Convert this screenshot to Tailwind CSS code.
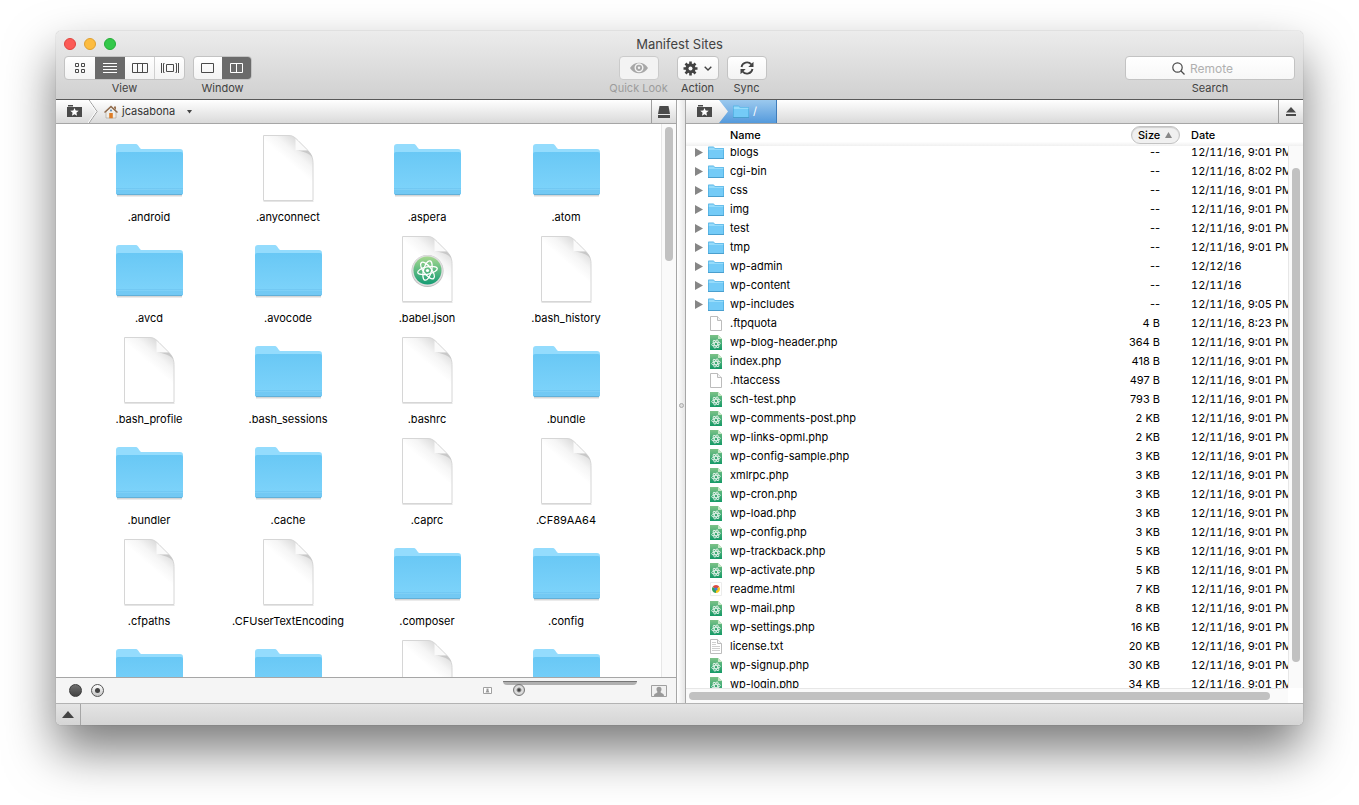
<!DOCTYPE html>
<html lang="en">
<head>
  <meta charset="UTF-8">
  <title>Manifest Sites</title>
  <meta name="viewport" content="width=device-width, initial-scale=1">
  <script src="https://cdn.jsdelivr.net/npm/@tailwindcss/browser@4"></script>
</head>
<body class="h-screen overflow-hidden bg-white px-14 pt-[31px] pb-20 font-['Inter','Liberation_Sans',sans-serif] text-[11px] text-black">

<!-- Shared icons -->
<svg class="absolute size-0" aria-hidden="true">
  <defs>
    <linearGradient id="gFolder" x1="0" y1="0" x2="0" y2="1"><stop offset="0" stop-color="#69c8f5"/><stop offset="1" stop-color="#7fd4fb"/></linearGradient>
    <linearGradient id="gAtom" x1="0" y1="0" x2="0" y2="1"><stop offset="0" stop-color="#a5d88f"/><stop offset="1" stop-color="#149c74"/></linearGradient>
    <linearGradient id="gPhp" x1="0" y1="0" x2="0" y2="1"><stop offset="0" stop-color="#7cc287"/><stop offset="1" stop-color="#169a67"/></linearGradient>
    <linearGradient id="gPage" gradientUnits="userSpaceOnUse" x1="34" y1="27" x2="48" y2="11"><stop offset="0" stop-color="#fff"/><stop offset="0.5" stop-color="#f5f5f5"/><stop offset="1" stop-color="#dedede"/></linearGradient>
  </defs>
  <symbol id="folder" viewBox="0 0 68 68">
    <path d="M2 61h65v1.500H2z" fill="#000" opacity=".16"/>
    <path d="M1 13a3 3 0 0 1 3-3h16c2 0 2.700 .6 3.700 2.200 1.300 2 1.800 2.800 3.800 2.800H65a3 3 0 0 1 3 3v42H1z" fill="#94dcfd"/>
    <path d="M1 20a2 2 0 0 1 2-2h63a2 2 0 0 1 2 2v39a2 2 0 0 1-2 2H3a2 2 0 0 1-2-2z" fill="url(#gFolder)"/>
    <path d="M1 54h67v6H1z" fill="#66bdea" opacity=".45"/>
    <path d="M1 55.500h67" stroke="#8ad7fa" opacity=".5"/>
    <path d="M2 60.500h65" stroke="#62b0d8"/>
  </symbol>
  <symbol id="page" viewBox="0 0 68 68">
    <path d="M9.500 67.500h50" stroke="#000" opacity=".1"/>
    <path d="M9.500 1.500H35c4 0 6 2 9 5l9 9c4 4 6 8 6 13v38H9.500z" fill="url(#gPage)" stroke="#d6d6d6"/>
    <path d="M41.500 16.500V4.800L53.500 16.500z" fill="#fafafa"/>
    <path d="M41.500 16.500h12c2 1.500 4 4 5 7-3-4-9-6.500-17-7z" fill="#bdbdbd" opacity=".7"/>
  </symbol>
  <symbol id="atom" viewBox="0 0 32 32">
    <g fill="none" stroke="#fff" stroke-width="1.300">
      <ellipse cx="16" cy="16" rx="4" ry="10" transform="rotate(15 16 16)"/>
      <ellipse cx="16" cy="16" rx="4" ry="10" transform="rotate(-38 16 16)"/>
      <ellipse cx="16" cy="16" rx="3.600" ry="10" transform="rotate(78 16 16)"/>
    </g>
    <circle cx="16" cy="16" r="1.600" fill="#fff"/>
  </symbol>
  <symbol id="atompage" viewBox="0 0 68 68">
    <use href="#page"/>
    <circle cx="34.500" cy="36" r="16" fill="#bdbdbd"/>
    <circle cx="34.500" cy="35.500" r="15.500" fill="#dedede"/>
    <circle cx="34.500" cy="35.500" r="14" fill="url(#gAtom)"/>
    <use href="#atom" x="18.500" y="19.500" width="32" height="32"/>
  </symbol>
  <symbol id="folder16" viewBox="0 0 16 16">
    <path d="M0 2.500C0 2 .3 1.500 1 1.500h4.500L7 3h8.500c.3 0 .5.2.5.500V14H0z" fill="#58b5e6"/>
    <path d="M.8 2.500h5l1 1.300h8.500V5H.8z" fill="#97dcfb"/>
    <path d="M1 5h14v8H1z" fill="#74cbf7"/>
    <path d="M0 13.500h16" stroke="#4a9fce"/>
  </symbol>
  <symbol id="page16" viewBox="0 0 16 16">
    <path d="M2.500 .5h7l4 4v10h-11z" fill="#fff" stroke="#bcbcbc"/>
    <path d="M9.500 .5v4h4" fill="#f4f4f4" stroke="#bcbcbc"/>
  </symbol>
  <symbol id="text16" viewBox="0 0 16 16">
    <use href="#page16"/>
    <path d="M4 3.500h4M4 5.500h4M4 7.500h8M4 9.500h8M4 11.500h8" stroke="#d0d0d0"/>
  </symbol>
  <symbol id="php16" viewBox="0 0 16 16">
    <path d="M2 0h8l4 4v11H2z" fill="url(#gPhp)"/>
    <path d="M10 0l4 4h-4z" fill="#c8e8c6"/>
    <g fill="none" stroke="#fff" stroke-width=".8" opacity=".9">
      <ellipse cx="8" cy="9" rx="1.700" ry="4.400" transform="rotate(20 8 9)"/>
      <ellipse cx="8" cy="9" rx="1.700" ry="4.400" transform="rotate(-35 8 9)"/>
      <ellipse cx="8" cy="9" rx="4.400" ry="1.600" transform="rotate(-10 8 9)"/>
    </g>
  </symbol>
  <symbol id="html16" viewBox="0 0 16 16">
    <path d="M2.500 .5h11v13h-11z" fill="#fff" stroke="#ececec"/>
    <path d="M8 7 4.500 5A4 4 0 0 1 11.500 5z" fill="#dd4b3e"/>
    <path d="M8 7 4.500 5A4 4 0 0 0 8 11z" fill="#35a056"/>
    <path d="M8 7 11.500 5A4 4 0 0 1 8 11z" fill="#fbc916"/>
    <circle cx="8" cy="7" r="1.600" fill="#3c7ce0"/>
  </symbol>
  <symbol id="places" viewBox="0 0 15 13">
    <path d="M1 0h5v1.500H1zM0 2h15v10H0z" fill="#4a4a4a"/>
    <path d="M7.500 2.900l1.200 2.700 3 .2-2.300 2 .7 3-2.600-1.600-2.600 1.600.7-3-2.300-2 3-.2z" fill="#fff"/>
  </symbol>
</svg>

<main class="flex h-full flex-col overflow-hidden rounded-[5px] bg-white shadow-[0_0_1px_rgba(0,0,0,0.45),0_25px_50px_rgba(0,0,0,0.53)]">

  <!-- Title bar and toolbar -->
  <header class="flex shrink-0 flex-col border-b border-[#585858] bg-linear-to-b from-[#ececec] to-[#d0d0d0] text-[#424242]">
    <div class="relative flex h-[25px] items-center gap-2 px-2">
      <button class="size-3 rounded-full border border-[#e0443e] bg-[#fc5b57]" aria-label="Close"></button>
      <button class="size-3 rounded-full border border-[#dfa030] bg-[#fdbc40]" aria-label="Minimize"></button>
      <button class="size-3 rounded-full border border-[#24ad37] bg-[#34c84a]" aria-label="Zoom"></button>
      <h1 class="pointer-events-none absolute inset-x-0 text-center text-[13px] leading-4">Manifest Sites</h1>
    </div>
    <div class="flex px-2 pb-[3px] text-center leading-4">
      <div class="w-[121px]">
        <div class="flex h-6 overflow-hidden rounded-[4px] border border-[#c3c3c3] bg-linear-to-b from-white to-[#f3f3f3]">
          <button class="grid w-[30px] place-items-center" aria-label="Icons">
            <svg width="12" height="12" fill="none" stroke="#4a4a4a"><path d="M1.500 1.500h3v3h-3zM7.500 1.500h3v3h-3zM1.500 7.500h3v3h-3zM7.500 7.500h3v3h-3z"/></svg>
          </button>
          <button class="grid w-[30px] place-items-center bg-[#6b6b6b]" aria-label="List">
            <svg width="14" height="12" stroke="#fff"><path d="M0 1.500h14M0 4.500h14M0 7.500h14M0 10.500h14"/></svg>
          </button>
          <button class="grid flex-1 place-items-center border-r border-[#d0d0d0]" aria-label="Columns">
            <svg width="16" height="10" fill="none" stroke="#4a4a4a"><path d="M.5 .5h15v9H.5zM5.500 .5v9M10.500 .5v9"/></svg>
          </button>
          <button class="grid flex-1 place-items-center" aria-label="Cover Flow">
            <svg width="18" height="12" fill="none" stroke="#4a4a4a"><path d="M5.500 2.500h7v7h-7zM.5 1v10M17.500 1v10M3.500 1.500h-1v9h1M14.500 1.500h1v9h-1"/></svg>
          </button>
        </div>
        View
      </div>
      <div class="ml-2 w-[59px]">
        <div class="flex h-6 overflow-hidden rounded-[4px] border border-[#c3c3c3] bg-linear-to-b from-white to-[#f3f3f3]">
          <button class="grid flex-1 place-items-center" aria-label="Single pane">
            <svg width="14" height="11" fill="none" stroke="#4a4a4a"><path d="M.5 .5h12v9H.5z"/></svg>
          </button>
          <button class="-mr-px grid w-[30px] place-items-center bg-[#6b6b6b]" aria-label="Two panes">
            <svg width="14" height="11" fill="none" stroke="#fff"><path d="M.5 .5h12v9H.5zM6.500 .5v9"/></svg>
          </button>
        </div>
        Window
      </div>
      <div class="ml-auto flex w-14 flex-col items-center whitespace-nowrap text-[#9c9c9c]">
        <button id="look" disabled class="grid h-6 w-10 place-items-center rounded-[4px] border border-[#cbcbcb] bg-[#f3f3f3]" aria-label="Quick Look">
          <svg width="18" height="12" viewBox="0 0 18 12"><path d="M0 6c4-7 14-7 18 0-4 7-14 7-18 0z" fill="#a8a8a8"/><circle cx="9" cy="5.800" r="3.800" fill="none" stroke="#f3f3f3" stroke-width="1.400"/><circle cx="9" cy="5.800" r="1.200" fill="#f3f3f3"/></svg>
        </button>
        <label for="look">Quick Look</label>
      </div>
      <div class="ml-2.5 flex w-[42px] flex-col items-center">
        <button id="action" class="flex h-6 w-full items-center justify-center gap-1.5 rounded-[4px] border border-[#c3c3c3] bg-linear-to-b from-white to-[#f3f3f3]" aria-label="Action">
          <svg width="15" height="15" viewBox="-7.500 -7.500 15 15"><g stroke="#424242" stroke-width="2.600"><path d="M0-7V7M-7 0H7M-5-5L5 5M5-5L-5 5"/></g><circle r="5" fill="#424242"/><circle r="2" fill="#fafafa"/></svg>
          <svg width="8" height="5" fill="none" stroke="#424242" stroke-width="1.400"><path d="M.7 .7L4 4 7.300 .7"/></svg>
        </button>
        <label for="action">Action</label>
      </div>
      <div class="ml-2 flex w-10 flex-col items-center">
        <button id="sync" class="grid h-6 w-full place-items-center rounded-[4px] border border-[#c3c3c3] bg-linear-to-b from-white to-[#f3f3f3]" aria-label="Sync">
          <svg width="14" height="14" viewBox="0 0 14 14"><path d="M1.500 6a5.600 5.600 0 0 1 9.800-2.600M12.500 8a5.600 5.600 0 0 1-9.800 2.600" fill="none" stroke="#424242" stroke-width="1.800"/><path d="M13.500 .8v5.200H8.300zM.5 13.200V8h5.200z" fill="#424242"/></svg>
        </button>
        <label for="sync">Sync</label>
      </div>
      <div class="relative ml-auto flex w-[170px] flex-col items-center">
        <svg class="absolute top-1.5 left-[47px]" width="13" height="13" fill="none" stroke="#4a4a4a" stroke-width="1.200"><circle cx="5.500" cy="5.500" r="4.700"/><path d="M9 9l3.500 3.500"/></svg>
        <input id="search" type="text" placeholder="Remote" class="h-6 w-full rounded-[4px] border border-[#c3c3c3] bg-linear-to-b from-white to-[#f7f7f7] pl-16 text-xs outline-none placeholder:text-[#b0b0b0]">
        <label for="search">Search</label>
      </div>
    </div>
  </header>

  <div class="flex min-h-0 flex-1">

    <!-- Local pane -->
    <section class="flex min-w-0 flex-[620_1_0%] flex-col">
      <nav class="flex h-6 shrink-0 items-center border-b border-[#a6a6a6] bg-linear-to-b from-white to-[#dadada] pl-[11px]">
        <button aria-label="Places"><svg width="15" height="13"><use href="#places"/></svg></button>
        <svg class="ml-1.5" width="11" height="23" fill="none"><path d="M1 0l8 11.500L1 23" stroke="#9a9a9a"/><path d="M0 0l8 11.500L0 23" stroke="#fff"/></svg>
        <button class="ml-[5px] flex items-center gap-1 text-[#333]">
          <svg width="14" height="14" viewBox="0 0 14 14"><path d="M2 6.500L7 2l5 4.500V13H2z" fill="#efede8" stroke="#a59d92" stroke-width=".6"/><path d="M10 1.500h2V5l-2-2z" fill="#9b7250"/><path d="M.5 7.500L7 1.500l6.500 6" fill="none" stroke="#8f6a4c" stroke-width="1.500"/><path d="M5.200 8h3.600v5.200H5.200z" fill="#dd7c25"/><circle cx="7" cy="5.500" r="1" fill="#5d87ad"/></svg>
          jcasabona
          <svg class="ml-2" width="5" height="4"><path d="M0 0h5L2.500 3.500z" fill="#444"/></svg>
        </button>
        <button class="ml-auto grid h-full w-[25px] place-items-center border-l border-[#9f9f9f]" aria-label="Volumes">
          <svg width="12" height="12" viewBox="0 0 12 12"><path d="M1.500 0h9L12 8H0z" fill="#4a4a4a"/><path d="M0 9h12v3H0z" fill="#4a4a4a"/></svg>
        </button>
      </nav>
      <div class="flex min-h-0 flex-1">
        <div id="icons" class="grid flex-1 auto-rows-[101px] grid-cols-[repeat(auto-fill,139px)] justify-center overflow-hidden pt-2.5 pr-0.5"></div>
        <div class="w-[15px] border-l border-[#e7e7e7] bg-[#fafafa] px-[3px] pt-[3px]"><div class="h-[134px] w-2 rounded-full bg-[#c1c1c1]"></div></div>
      </div>
      <div class="flex h-[26px] shrink-0 items-center border-t border-[#a6a6a6] bg-[#f5f5f5] px-[13px]">
        <button class="size-[13px] rounded-full border border-[#3c3c3c] bg-linear-to-b from-[#707070] to-[#444]" aria-label="Icon view"></button>
        <button class="ml-[9px] grid size-[13px] place-items-center rounded-full border border-[#555] bg-linear-to-b from-white to-[#c4c4c4]" aria-label="Preview view"><span class="size-[5px] rounded-full bg-[#444]"></span></button>
        <svg class="mr-[11px] ml-auto" width="9" height="7"><path d="M.5 .5h8v6h-8z" fill="#fff" stroke="#a0a0a0"/><path d="M3.500 1.500h2v2l1 2h-4l1-2z" fill="#999"/></svg>
        <div class="flex w-[134px] flex-col self-start pt-[3px]">
          <div class="h-1 rounded-b-sm border-t border-[#777] bg-[#b0b0b0]"></div>
          <input type="range" value="8" aria-label="Icon size" class="-mt-px h-3 w-full appearance-none bg-transparent [&::-webkit-slider-thumb]:size-3 [&::-webkit-slider-thumb]:appearance-none [&::-webkit-slider-thumb]:rounded-full [&::-webkit-slider-thumb]:border [&::-webkit-slider-thumb]:border-[#777] [&::-webkit-slider-thumb]:bg-[radial-gradient(circle,#444_1px,#e2e2e2_3px,#cfcfcf_5px)]">
        </div>
        <svg class="-mr-1 ml-3.5" width="16" height="12"><path d="M.5 .5h15v11H.5z" fill="#f0f0f0" stroke="#a0a0a0"/><path d="M5.500 4c0-3 5-3 5 0 0 1.500-.5 2-1 3 .5 1.500 3.500 1 3.500 4H3c0-3 3-2.500 3.500-4-.5-1-1-1.500-1-3z" fill="#999"/></svg>
      </div>
    </section>

    <div class="grid w-2.5 shrink-0 cursor-col-resize place-items-center border-x border-[#a6a6a6] bg-linear-to-r from-white to-[#e6e6e6] pt-2">
      <span class="size-[5px] rounded-full border border-[#aaa] bg-[#ddd]"></span>
    </div>

    <!-- Remote pane -->
    <section class="flex min-w-0 flex-[617_1_0%] flex-col">
      <nav class="flex h-6 shrink-0 items-center border-b border-[#a6a6a6] bg-linear-to-b from-white to-[#dadada] pl-[11px]">
        <button aria-label="Places"><svg width="15" height="13"><use href="#places"/></svg></button>
        <button class="ml-[7px] flex h-full w-[58px] items-center gap-1 border-r border-[#3f7cba] bg-linear-to-b from-[#9bc9ee] to-[#549adc] pl-3.5 text-white [clip-path:polygon(0_0,100%_0,100%_100%,0_100%,9px_50%)]">
          <svg width="16" height="16"><use href="#folder16"/></svg>/
        </button>
        <button class="ml-auto grid h-full w-[25px] place-items-center border-l border-[#9f9f9f]" aria-label="Disconnect">
          <svg width="10" height="9"><path d="M5 0l5 5.500H0zM0 7h10v2H0z" fill="#4a4a4a"/></svg>
        </button>
      </nav>
      <table class="w-full shrink-0 table-fixed">
        <thead>
          <tr class="h-[22px] bg-linear-to-b from-white from-80% to-[#f0f0f0] text-left leading-4">
            <th class="pl-11 font-medium">Name</th>
            <th class="w-16 p-0 font-medium">
              <button class="ml-1 flex h-[18px] w-[49px] items-center gap-[5px] rounded-full border border-[#c3c3c3] bg-[#f0f0f0] pl-1.5 shadow-[inset_0_1px_1px_rgba(0,0,0,0.15)]">Size
                <svg width="7" height="6"><path d="M3.500 0L7 6H0z" fill="#888"/></svg>
              </button>
            </th>
            <th class="w-[112px] font-medium">Date</th>
          </tr>
        </thead>
      </table>
      <div class="flex min-h-0 flex-1">
        <div class="flex-1 overflow-hidden">
          <table class="-mt-[3px] w-full table-fixed whitespace-nowrap">
            <tbody id="files"></tbody>
          </table>
        </div>
        <div class="w-[15px] border-l border-[#e7e7e7] bg-[#fafafa] px-[3px] pt-[22px]"><div class="h-[494px] w-2 rounded-full bg-[#c1c1c1]"></div></div>
      </div>
      <div class="flex h-[15px] shrink-0">
        <div class="flex-1 border-t border-[#e7e7e7] bg-[#fafafa] py-[3px] pr-[18px] pl-[3px]"><div class="h-2 rounded-full bg-[#c1c1c1]"></div></div>
        <div class="w-[15px]"></div>
      </div>
    </section>
  </div>

  <footer class="flex h-[22px] shrink-0 border-t border-[#b3b3b3] bg-linear-to-b from-[#e4e4e4] to-[#d5d5d5]">
    <button class="grid w-[25px] place-items-center border-r border-[#a6a6a6]" aria-label="Show transfers">
      <svg width="12" height="7"><path d="M6 0l6 7H0z" fill="#444"/></svg>
    </button>
  </footer>
</main>

<script>
const icons = [
  ['folder', '.android'], ['page', '.anyconnect'], ['folder', '.aspera'], ['folder', '.atom'],
  ['folder', '.avcd'], ['folder', '.avocode'], ['atompage', '.babel.json'], ['page', '.bash_history'],
  ['page', '.bash_profile'], ['folder', '.bash_sessions'], ['page', '.bashrc'], ['folder', '.bundle'],
  ['folder', '.bundler'], ['folder', '.cache'], ['page', '.caprc'], ['page', '.CF89AA64'],
  ['page', '.cfpaths'], ['page', '.CFUserTextEncoding'], ['folder', '.composer'], ['folder', '.config'],
  ['folder', ''], ['folder', ''], ['page', ''], ['folder', '']
];
document.getElementById('icons').innerHTML = icons.map(([icon, name]) => `
  <figure class="flex flex-col items-center gap-2">
    <svg class="size-[68px]"><use href="#${icon}"/></svg>
    <figcaption class="leading-[14px]">${name}</figcaption>
  </figure>`).join('');

const day = '12/11/16, 9:01 PM';
const files = [
  ['folder16', 'blogs', '--', day],
  ['folder16', 'cgi-bin', '--', '12/11/16, 8:02 PM'],
  ['folder16', 'css', '--', day],
  ['folder16', 'img', '--', day],
  ['folder16', 'test', '--', day],
  ['folder16', 'tmp', '--', day],
  ['folder16', 'wp-admin', '--', '12/12/16'],
  ['folder16', 'wp-content', '--', '12/11/16'],
  ['folder16', 'wp-includes', '--', '12/11/16, 9:05 PM'],
  ['page16', '.ftpquota', '4 B', '12/11/16, 8:23 PM'],
  ['php16', 'wp-blog-header.php', '364 B', day],
  ['php16', 'index.php', '418 B', day],
  ['page16', '.htaccess', '497 B', day],
  ['php16', 'sch-test.php', '793 B', day],
  ['php16', 'wp-comments-post.php', '2 KB', day],
  ['php16', 'wp-links-opml.php', '2 KB', day],
  ['php16', 'wp-config-sample.php', '3 KB', day],
  ['php16', 'xmlrpc.php', '3 KB', day],
  ['php16', 'wp-cron.php', '3 KB', day],
  ['php16', 'wp-load.php', '3 KB', day],
  ['php16', 'wp-config.php', '3 KB', day],
  ['php16', 'wp-trackback.php', '5 KB', day],
  ['php16', 'wp-activate.php', '5 KB', day],
  ['html16', 'readme.html', '7 KB', day],
  ['php16', 'wp-mail.php', '8 KB', day],
  ['php16', 'wp-settings.php', '16 KB', day],
  ['text16', 'license.txt', '20 KB', day],
  ['php16', 'wp-signup.php', '30 KB', day],
  ['php16', 'wp-login.php', '34 KB', day]
];
const arrow = '<button class="w-2" aria-label="Expand"><svg width="8" height="9"><path d="M0 0l8 4.500L0 9z" fill="#868686"/></svg></button>';
document.getElementById('files').innerHTML = files.map(([icon, name, size, date]) => `
  <tr class="h-[19px] leading-[19px]">
    <td class="p-0"><div class="flex items-center pl-[9px]">
      ${icon === 'folder16' ? arrow : '<span class="w-2"></span>'}
      <svg class="mr-1.5 ml-[5px] size-4"><use href="#${icon}"/></svg>${name}
    </div></td>
    <td class="w-16 p-0 pr-[31px]"><div class="flex justify-end">${size}</div></td>
    <td class="w-[97px] overflow-hidden p-0 tabular-nums">${date}</td>
  </tr>`).join('');
</script>
</body>
</html>
